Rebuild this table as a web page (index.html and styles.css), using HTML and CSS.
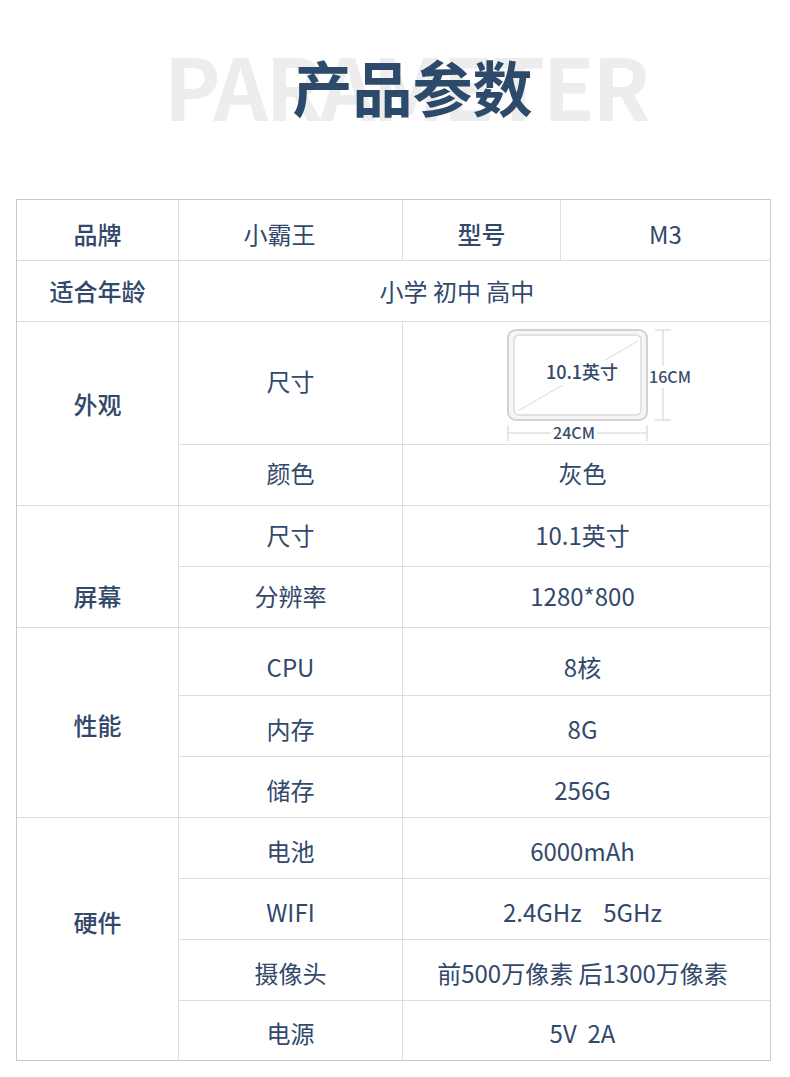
FILE: index.html
```html
<!DOCTYPE html>
<html lang="zh-CN">
<head>
<meta charset="utf-8">
<title>产品参数</title>
<link rel="stylesheet" href="styles.css">
</head>
<body>
<header class="hero">
  <span class="hero-bg">PARAMETER</span>
  <h1 class="hero-title">产品参数</h1>
</header>

<div class="spec">
  <div class="c h r1">品牌</div>
  <div class="c r1 brand">小霸王</div>
  <div class="c h r1">型号</div>
  <div class="c r1">M3</div>

  <div class="c h r2">适合年龄</div>
  <div class="c span3 ages r2">小学 初中 高中</div>

  <div class="c h grp g-look">外观</div>
  <div class="c r3">尺寸</div>
  <div class="c span2 pic">
    <svg class="tablet" viewBox="0 0 366 121" width="366" height="121">
      <rect x="104" y="8" width="139" height="90" rx="8" fill="#f6f6f6" stroke="#d2d2d2" stroke-width="2"/>
      <rect x="110" y="13" width="127" height="80" rx="5" fill="#ffffff" stroke="#dadada" stroke-width="1.5"/>
      <line x1="114" y1="89" x2="234" y2="19" stroke="#d9d9d9" stroke-width="1"/>
      <rect x="138" y="38" width="80" height="25" fill="#ffffff"/>
      <text x="178" y="57" class="dim-main" text-anchor="middle">10.1英寸</text>
      <line x1="259" y1="8" x2="259" y2="98" stroke="#cfcfcf" stroke-width="1"/>
      <line x1="251" y1="8" x2="267" y2="8" stroke="#cfcfcf" stroke-width="1"/>
      <line x1="251" y1="98" x2="267" y2="98" stroke="#cfcfcf" stroke-width="1"/>
      <rect x="245" y="44" width="42" height="22" fill="#ffffff"/>
      <text x="266" y="61" class="dim" text-anchor="middle">16CM</text>
      <line x1="104" y1="111" x2="243" y2="111" stroke="#cfcfcf" stroke-width="1"/>
      <line x1="104" y1="103" x2="104" y2="119" stroke="#cfcfcf" stroke-width="1"/>
      <line x1="243" y1="103" x2="243" y2="119" stroke="#cfcfcf" stroke-width="1"/>
      <rect x="147" y="101" width="46" height="20" fill="#ffffff"/>
      <text x="170" y="117" class="dim" text-anchor="middle">24CM</text>
    </svg>
  </div>
  <div class="c r4">颜色</div>
  <div class="c span2 val r4">灰色</div>

  <div class="c h grp g-screen">屏幕</div>
  <div class="c r5">尺寸</div>
  <div class="c span2 val r5">10.1英寸</div>
  <div class="c r5">分辨率</div>
  <div class="c span2 val r5">1280*800</div>

  <div class="c h grp g-perf">性能</div>
  <div class="c r7">CPU</div>
  <div class="c span2 val r7">8核</div>
  <div class="c">内存</div>
  <div class="c span2 val">8G</div>
  <div class="c">储存</div>
  <div class="c span2 val">256G</div>

  <div class="c h grp g-hw">硬件</div>
  <div class="c">电池</div>
  <div class="c span2 val">6000mAh</div>
  <div class="c">WIFI</div>
  <div class="c span2 val">2.4GHz    5GHz</div>
  <div class="c">摄像头</div>
  <div class="c span2 val">前500万像素 后1300万像素</div>
  <div class="c">电源</div>
  <div class="c span2 val">5V  2A</div>
</div>
</body>
</html>
```

FILE: styles.css
```css
* {
  box-sizing: border-box;
}

body {
  margin: 0;
  background: #ffffff;
  font-family: "Noto Sans CJK SC", "Noto Sans", sans-serif;
  color: #32496b;
}

.hero {
  display: grid;
  height: 199px;
  justify-items: center;
  align-items: start;
}

.hero-bg,
.hero-title {
  grid-area: 1 / 1;
}

.hero-bg {
  font-size: 85px;
  font-weight: 700;
  line-height: 1;
  letter-spacing: -2.5px;
  color: #ededed;
  margin-top: 41px;
  margin-left: 22px;
}

.hero-title {
  margin: 56px 0 0 35px;
  font-size: 60px;
  font-weight: 700;
  line-height: 1;
  color: #2d4a6b;
}

.spec {
  display: grid;
  grid-template-columns: 161px 223px 157px 209px;
  grid-template-rows: 60px 60px 122px 60px 60px 60px 67px 60px 60px 60px 60px 60px 59px;
  gap: 1px;
  width: 755px;
  margin-left: 16px;
  background: #dedede;
  border: 1px solid #c9c9c9;
}

.c {
  background: #ffffff;
  display: flex;
  align-items: center;
  justify-content: center;
  font-size: 24px;
  line-height: 30px;
  padding-top: 5px;
  white-space: pre;
}

.h {
  font-weight: 500;
}

.r1 {
  padding-top: 7px;
}

.r2 {
  padding-top: 0;
}

.r3 {
  padding-top: 0;
  padding-bottom: 4px;
}

.r4 {
  padding-top: 0;
  padding-bottom: 5px;
}

.r5 {
  padding-top: 0;
  padding-bottom: 2px;
}

.r7 {
  padding-top: 11px;
}

.brand {
  padding-right: 22px;
}

.span2 {
  grid-column: span 2;
}

.span3 {
  grid-column: span 3;
}

.ages {
  padding-right: 35px;
}

.val {
  padding-right: 8px;
}

.pic {
  padding: 0;
  align-items: stretch;
}

.tablet {
  display: block;
}

.dim-main {
  font-family: "Noto Sans CJK SC", sans-serif;
  font-size: 18px;
  font-weight: 500;
  fill: #33496b;
}

.dim {
  font-family: "Noto Sans CJK SC", sans-serif;
  font-size: 16px;
  font-weight: 500;
  fill: #3a4e6c;
}

.grp {
  align-items: flex-start;
}

.g-look {
  grid-row: span 2;
  padding-top: 67px;
}

.g-screen {
  grid-row: span 2;
  padding-top: 75px;
}

.g-perf {
  grid-row: span 3;
  padding-top: 82px;
}

.g-hw {
  grid-row: span 4;
  padding-top: 89px;
}
```
